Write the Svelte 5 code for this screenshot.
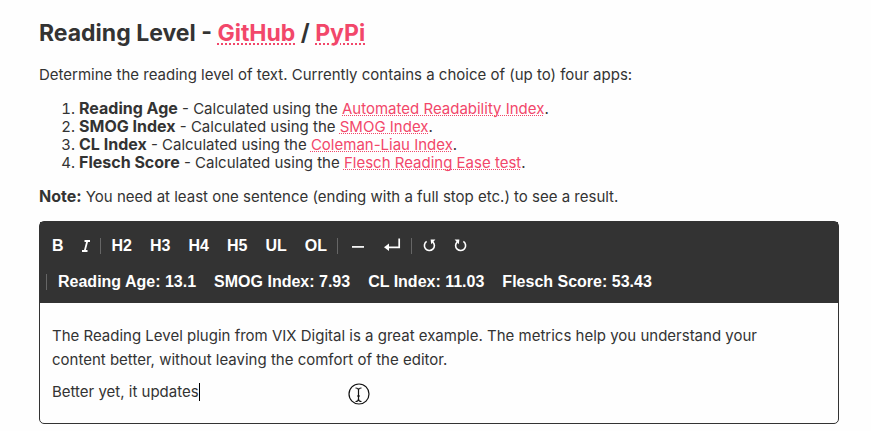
<script>
  const indices = [
    { name: 'Reading Age', link: 'Automated Readability Index', href: '#automated-readability' },
    { name: 'SMOG Index', link: 'SMOG Index', href: '#smog' },
    { name: 'CL Index', link: 'Coleman-Liau Index', href: '#coleman-liau' },
    { name: 'Flesch Score', link: 'Flesch Reading Ease test', href: '#flesch' }
  ];
  const blocks = ['H2', 'H3', 'H4', 'H5', 'UL', 'OL'];
  const scores = [
    ['Reading Age', '13.1'],
    ['SMOG Index', '7.93'],
    ['CL Index', '11.03'],
    ['Flesch Score', '53.43']
  ];
</script>

<main>
  <h1>Reading Level - <a href="#github">GitHub</a> / <a href="#pypi">PyPi</a></h1>
  <p class="intro">Determine the reading level of text. Currently contains a choice of (up to) four apps:</p>
  <ol>
    {#each indices as item}
      <li><strong>{item.name}</strong> - Calculated using the <a href={item.href}>{item.link}</a>.</li>
    {/each}
  </ol>
  <p class="note"><strong>Note:</strong> You need at least one sentence (ending with a full stop etc.) to see a result.</p>

  <section class="editor">
    <header>
      <div class="row">
        <button type="button">B</button>
        <button type="button" aria-label="Italic">
          <svg width="8" height="12" viewBox="0 0 8 12"><path d="M2.5 1H8M0 11H5.5M5.3 1L2.7 11" stroke="currentColor" stroke-width="1.8" fill="none" /></svg>
        </button>
        <span class="divider"></span>
        {#each blocks as block}
          <button type="button">{block}</button>
        {/each}
        <span class="divider"></span>
        <button type="button" aria-label="Horizontal rule">
          <svg width="17" height="16" viewBox="0 0 17 16"><path d="M3 8.9H15" stroke="currentColor" stroke-width="1.7" /></svg>
        </button>
        <button type="button" aria-label="Line break">
          <svg width="17" height="16" viewBox="0 0 17 16"><path d="M15.2 .5V9.3H4" stroke="currentColor" stroke-width="1.7" fill="none" /><path d="M0 9.3L5 5.6V13Z" fill="currentColor" /></svg>
        </button>
        <span class="divider"></span>
        <button type="button" aria-label="Undo">
          <svg width="13" height="16" viewBox="0 0 13 16"><path d="M3.6 3.4A5 5 0 1 0 9.7 3.8" stroke="currentColor" stroke-width="1.6" fill="none" /><path d="M7.6 1.6H12.4L8.2 6.2Z" fill="currentColor" /></svg>
        </button>
        <button type="button" aria-label="Redo">
          <svg width="13" height="16" viewBox="0 0 13 16"><path d="M9.4 3.4A5 5 0 1 1 3.3 3.8" stroke="currentColor" stroke-width="1.6" fill="none" /><path d="M5.4 1.6H.6L4.8 6.2Z" fill="currentColor" /></svg>
        </button>
      </div>
      <div class="row scores">
        <span class="divider"></span>
        {#each scores as [label, value]}
          <span class="score">{label}: {value}</span>
        {/each}
      </div>
    </header>
    <div class="content" contenteditable="true" role="textbox" aria-multiline="true" aria-label="Content" tabindex="0">
      <p>The Reading Level plugin from VIX Digital is a great example. The metrics help you understand your content better, without leaving the comfort of the editor.</p>
      <p>Better yet, it updates<span class="caret"></span></p>
    </div>
    <svg class="pointer" width="22" height="22" viewBox="0 0 22 22" aria-hidden="true">
      <circle cx="11" cy="11" r="10" fill="none" stroke="#111" stroke-width="1.2" />
      <path d="M7.5 5C9.5 5 10.5 5.5 10.5 7V16C10.5 17.8 9.5 18.5 7.5 18.5M13.5 5C11.5 5 10.5 5.5 10.5 7M10.5 16C10.5 17.8 11.5 18.5 13.5 18.5M9 13H12" fill="none" stroke="#111" stroke-width="1.2" />
    </svg>
  </section>
</main>

<style>
  :global(body) {
    margin: 0;
    background: #fefefe;
  }

  main {
    padding: 18px 32px 7px 39px;
    color: #333;
    font: 15px/18px Inter, "Liberation Sans", sans-serif;
  }

  h1 {
    margin: 0 0 17px;
    font-size: 23px;
    line-height: 30px;
    font-weight: 700;
  }

  p {
    margin: 0;
  }

  a {
    color: #f2476a;
    text-decoration: underline dotted 1px;
    text-decoration-skip-ink: none;
    text-underline-offset: 1px;
  }

  h1 a {
    text-decoration-thickness: 2px;
    text-decoration-skip-ink: auto;
    text-underline-offset: 2px;
  }

  .intro,
  .note {
    line-height: 20px;
  }

  ol {
    margin: 15px 0;
    padding-left: 40px;
  }

  li {
    height: 18px;
  }

  li::marker {
    font-size: 15px;
  }

  strong {
    font-size: 16px;
    font-weight: 700;
    line-height: 1;
  }

  .editor {
    position: relative;
    margin-top: 14px;
    border: 1px solid #333;
    border-radius: 5px;
  }

  header {
    padding: 6px 3px 3px;
    background: #333;
    color: #fff;
    font: bold 16px/36px "Liberation Sans", Arial, sans-serif;
  }

  .row {
    display: flex;
    flex-wrap: wrap;
    align-items: center;
  }

  .scores {
    padding-left: 2px;
  }

  button {
    display: flex;
    align-items: center;
    height: 36px;
    margin: 0;
    padding: 0 9px;
    border: 0;
    background: none;
    color: inherit;
    font: inherit;
  }

  .divider {
    width: 1px;
    height: 16px;
    margin: 0 2px 0 1px;
    background: #666;
  }

  .score {
    padding: 0 9px;
  }

  .content {
    padding: 21px 36px 19px 12px;
    line-height: 24px;
    outline: none;
  }

  .content p + p {
    margin-top: 8px;
  }

  .caret {
    display: inline-block;
    width: 1px;
    height: 18px;
    background: #000;
    vertical-align: -4px;
  }

  .pointer {
    position: absolute;
    top: 161px;
    left: 308px;
  }
</style>
